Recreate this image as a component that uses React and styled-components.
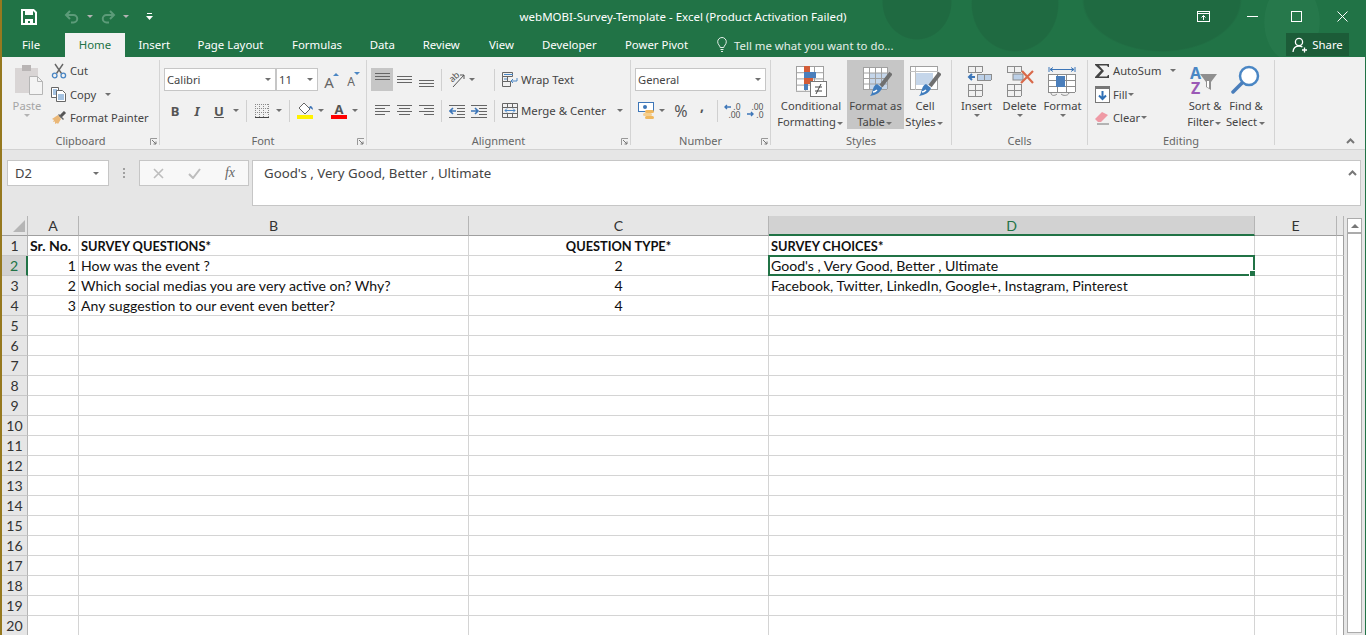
import React from 'react';
import styled, { createGlobalStyle } from 'styled-components';

const UI = '"Noto Sans", "Open Sans", sans-serif';
const CELL = 'Lato, "Open Sans", sans-serif';
const GREEN = '#217346';
const BLUE = '#4a86c4';

const GlobalStyle = createGlobalStyle`
  html, body { margin: 0; padding: 0; background: #e6e6e6; overflow: hidden; }
`;

const Window = styled.div`
  width: 1366px;
  height: 635px;
  box-sizing: border-box;
  overflow: hidden;
  display: flex;
  flex-direction: column;
  border-left: 2px solid #96791f;
  border-right: 1px solid ${GREEN};
  font-family: ${UI};
  font-size: 11.2px;
  color: #444;
`;

const Header = styled.header`
  flex: none;
  height: 57px;
  color: #fff;
  background:
    radial-gradient(ellipse 35px 38px at 915px 2px, #1f6a41 97%, transparent 100%),
    radial-gradient(ellipse 44px 48px at 1013px 4px, #1f6a41 97%, transparent 100%),
    radial-gradient(ellipse 80px 52px at 1160px 0px, #1f6a41 97%, transparent 100%),
    radial-gradient(ellipse 28px 40px at 1290px 22px, #26784b 97%, transparent 100%),
    ${GREEN};
`;

const TitleRow = styled.div`
  height: 33px;
  display: grid;
  grid-template-columns: 1fr auto 1fr;
  align-items: center;
`;

const Qat = styled.div`
  display: flex;
  align-items: center;
  padding-left: 19px;
`;

const QatSlot = styled.div`
  width: ${({ $w }) => $w}px;
  display: flex;
  justify-content: center;
  align-items: center;
`;

const Title = styled.div`
  font-size: 11.5px;
  white-space: nowrap;
  margin-right: 1px;
`;

const WindowControls = styled.div`
  display: flex;
  justify-content: flex-end;
  align-items: center;
`;

const WindowButton = styled.div`
  width: ${({ $w }) => $w}px;
  display: flex;
  justify-content: center;
`;

const TabRow = styled.nav`
  height: 24px;
  display: flex;
  align-items: stretch;
`;

const Tab = styled.div`
  width: ${({ $w }) => $w}px;
  margin-right: ${({ $mr }) => $mr || 0}px;
  padding-bottom: 1px;
  box-sizing: border-box;
  display: flex;
  align-items: center;
  justify-content: center;
  white-space: nowrap;
  font-size: 11.4px;
  background: ${({ $active }) => ($active ? '#f1f1f1' : 'transparent')};
  color: ${({ $active }) => ($active ? GREEN : '#fff')};
`;

const TellMe = styled.div`
  display: flex;
  align-items: center;
  gap: 7px;
  margin-left: 14px;
  font-size: 11.4px;
  color: #e4efe9;
`;

const ShareButton = styled.div`
  margin-left: auto;
  margin-right: 16px;
  width: 63px;
  height: 23px;
  display: flex;
  align-items: center;
  justify-content: center;
  gap: 4px;
  font-size: 11.4px;
  background: #1c5c38;
`;

const Ribbon = styled.section`
  flex: none;
  height: 93px;
  box-sizing: border-box;
  padding-top: 3px;
  display: flex;
  align-items: flex-start;
  position: relative;
  background: #f1f1f1;
  border-bottom: 1px solid #d2d2d2;
`;

const Group = styled.div`
  width: ${({ $w }) => $w}px;
  height: 85px;
  flex: none;
  box-sizing: border-box;
  position: relative;
  display: flex;
  flex-direction: column;
  border-right: 1px solid #d4d4d4;
`;

const GroupBody = styled.div`
  height: 72px;
  flex: none;
  display: flex;
  padding-left: ${({ $pl }) => $pl || 0}px;
`;

const GroupLabel = styled.div`
  height: 13px;
  line-height: 18px;
  text-align: center;
  color: #666;
  font-size: 11px;
  white-space: nowrap;
`;

const Launcher = styled.svg`
  position: absolute;
  right: 2px;
  bottom: 0;
`;

const Stack = styled.div`
  padding-top: 8px;
  display: flex;
  flex-direction: column;
  gap: 8px;
`;

const ToolRow = styled.div`
  display: flex;
  align-items: center;
  height: 23px;
`;

const Select = styled.div`
  width: ${({ $w }) => $w}px;
  height: 23px;
  box-sizing: border-box;
  margin-right: ${({ $mr }) => $mr || 0}px;
  padding: 0 2px 1px;
  display: flex;
  align-items: center;
  justify-content: space-between;
  background: #fff;
  border: 1px solid #c6c6c6;
  color: #444;
`;

const ToolButton = styled.div`
  width: ${({ $w }) => $w || 22}px;
  height: 23px;
  margin-left: ${({ $ml }) => $ml || 0}px;
  flex: none;
  display: flex;
  align-items: center;
  justify-content: center;
  background: ${({ $active }) => ($active ? '#c6c6c6' : 'transparent')};
  font-size: ${({ $fs }) => $fs || 12}px;
  font-weight: ${({ $bold }) => ($bold ? 700 : 400)};
  font-style: ${({ $italic }) => ($italic ? 'italic' : 'normal')};
  text-decoration: ${({ $under }) => ($under ? 'underline' : 'none')};
  color: #555;
`;

const CommaMark = styled.span`
  font-size: 14px;
  font-weight: 700;
  line-height: 14px;
  color: #555;
  transform: translateY(-5px);
`;

const FxMark = styled.span`
  font-family: "Liberation Serif", serif;
  font-style: italic;
  font-size: 14px;
  color: #666;
`;

const GrowMark = styled.span`
  position: relative;
  font-size: ${({ $shrink }) => ($shrink ? 12 : 15)}px;
  line-height: 14px;
  color: #666;
  margin-top: 5px;
  margin-right: 4px;
  &::after {
    content: '';
    position: absolute;
    top: ${({ $shrink }) => ($shrink ? -3 : -2)}px;
    left: 100%;
    border-style: solid;
    border-width: ${({ $shrink }) => ($shrink ? '3px 3px 0' : '0 3px 3px')};
    border-color: ${BLUE} transparent;
    margin-left: -1px;
  }
`;

const ColorMark = styled.span`
  width: 16px;
  height: 17px;
  box-sizing: border-box;
  display: flex;
  justify-content: center;
  font-size: 13px;
  font-weight: 700;
  line-height: 14px;
  color: #555;
  border-bottom: 4px solid ${({ $color }) => $color};
`;

const RotatedAb = styled.span`
  position: absolute;
  left: 0;
  top: 0;
  font-size: 9px;
  line-height: 10px;
  color: #555;
  transform: rotate(-42deg);
`;

const OrientationWrap = styled.span`
  position: relative;
  width: 17px;
  height: 16px;
  display: block;
`;

const DecimalWrap = styled.span`
  position: relative;
  width: 17px;
  height: 15px;
  display: flex;
  flex-direction: column;
  font-size: 8.5px;
  line-height: 7.5px;
  color: #555;
  text-align: right;
`;

const DecimalArrow = styled.svg`
  position: absolute;
  left: 0;
  top: ${({ $top }) => $top}px;
`;

const SortLetter = styled.span`
  position: absolute;
  left: ${({ $left }) => $left}px;
  top: ${({ $top }) => $top}px;
  font-size: 16px;
  font-weight: 700;
  line-height: 16px;
  color: ${({ $color }) => $color};
`;

const SortWrap = styled.span`
  position: relative;
  width: 32px;
  height: 32px;
  display: block;
`;

const FunnelSvg = styled.svg`
  position: absolute;
  left: 11px;
  top: 8px;
`;

const Caret = styled.span`
  width: ${({ $w }) => $w || 10}px;
  margin-left: ${({ $ml }) => $ml || 0}px;
  flex: none;
  display: inline-flex;
  justify-content: center;
  vertical-align: middle;
  &::after {
    content: '';
    border-style: solid;
    border-width: 3px 3px 0;
    border-color: ${({ $light }) => ($light ? '#b3b3b3' : '#707070')} transparent transparent;
  }
`;

const Divider = styled.div`
  width: 1px;
  height: 22px;
  flex: none;
  margin-left: ${({ $ml }) => $ml || 4}px;
  margin-right: ${({ $mr }) => $mr || 4}px;
  background: #d0d0d0;
`;

const WideButton = styled.div`
  display: flex;
  align-items: center;
  gap: ${({ $gap }) => $gap || 3}px;
  padding-left: 3px;
  height: 23px;
  font-size: 11.4px;
  white-space: nowrap;
`;

const SmallColumn = styled.div`
  width: ${({ $w }) => $w}px;
  margin-left: ${({ $ml }) => $ml || 0}px;
  margin-top: -1px;
  flex: none;
  display: flex;
  flex-direction: column;
`;

const SmallButton = styled.div`
  height: 23.5px;
  display: flex;
  align-items: center;
  white-space: nowrap;
`;

const SmallIcon = styled.span`
  width: 16px;
  margin-right: 3px;
  flex: none;
  display: flex;
  justify-content: center;
`;

const BigButton = styled.div`
  width: ${({ $w }) => $w}px;
  height: 69px;
  flex: none;
  box-sizing: border-box;
  padding-top: 5px;
  display: flex;
  flex-direction: column;
  align-items: center;
  background: ${({ $active }) => ($active ? '#c6c6c6' : 'transparent')};
  color: ${({ $disabled }) => ($disabled ? '#a5a5a5' : '#444')};
  line-height: 16px;
  text-align: center;
  white-space: nowrap;
`;

const BigIcon = styled.div`
  height: 33px;
  flex: none;
  display: flex;
  align-items: flex-start;
  justify-content: center;
`;

const CollapseChevron = styled.svg`
  position: absolute;
  right: ${({ $right }) => $right}px;
  bottom: ${({ $bottom }) => $bottom}px;
`;

const FormulaBar = styled.div`
  flex: none;
  height: 66px;
  box-sizing: border-box;
  padding: 10px 4px 0 5px;
  display: flex;
  align-items: flex-start;
  background: #e6e6e6;
`;

const NameBox = styled.div`
  width: 102px;
  height: 26px;
  box-sizing: border-box;
  padding: 0 7px;
  display: flex;
  align-items: center;
  justify-content: space-between;
  background: #fff;
  border: 1px solid #c6c6c6;
  font-size: 13px;
`;

const GripDots = styled.div`
  width: 30px;
  height: 26px;
  display: flex;
  flex-direction: column;
  align-items: center;
  justify-content: center;
  gap: 2px;
  & > i {
    width: 2px;
    height: 2px;
    background: #a0a0a0;
  }
`;

const FxBox = styled.div`
  width: 110px;
  height: 26px;
  box-sizing: border-box;
  margin-right: 3px;
  display: grid;
  grid-template-columns: 36px 36px 36px;
  align-items: center;
  justify-items: center;
  background: #f8f8f8;
  border: 1px solid #c6c6c6;
`;

const FormulaInput = styled.div`
  flex: 1;
  height: 46px;
  box-sizing: border-box;
  padding: 3px 11px;
  position: relative;
  background: #fff;
  border: 1px solid #c6c6c6;
  font-size: 13.25px;
  line-height: 18px;
`;

const SheetArea = styled.div`
  flex: none;
  display: flex;
  align-items: flex-start;
`;

const SheetGrid = styled.div`
  flex: none;
  display: grid;
  grid-template-columns: 26px 51px 390px 300px 486px 82px 7px;
  grid-auto-rows: 20px;
  font-family: ${CELL};
  font-size: 14.1px;
  color: #111;
`;

const Corner = styled.div`
  background: #e6e6e6;
  border-right: 1px solid #b5b5b5;
  border-bottom: 1px solid #9f9f9f;
  box-sizing: border-box;
  display: flex;
  align-items: flex-end;
  justify-content: flex-end;
  padding: 0 2px 3px 0;
  &::after {
    content: '';
    border-style: solid;
    border-width: 0 0 12px 12px;
    border-color: transparent transparent #b5b5b5;
  }
`;

const ColHead = styled.div`
  box-sizing: border-box;
  display: flex;
  align-items: center;
  justify-content: center;
  background: ${({ $selected }) => ($selected ? '#d2d2d2' : '#e6e6e6')};
  color: ${({ $selected }) => ($selected ? GREEN : '#333')};
  border-right: 1px solid #b5b5b5;
  border-bottom: ${({ $selected }) => ($selected ? `2px solid ${GREEN}` : '1px solid #9f9f9f')};
`;

const RowHead = styled.div`
  box-sizing: border-box;
  display: flex;
  align-items: center;
  justify-content: center;
  background: ${({ $selected }) => ($selected ? '#d2d2d2' : '#e6e6e6')};
  color: ${({ $selected }) => ($selected ? GREEN : '#333')};
  border-bottom: 1px solid #c8c8c8;
  border-right: ${({ $selected }) => ($selected ? `2px solid ${GREEN}` : '1px solid #b5b5b5')};
`;

const Cell = styled.div`
  box-sizing: border-box;
  position: relative;
  padding: 0 2px;
  display: flex;
  align-items: center;
  white-space: nowrap;
  justify-content: ${({ $align }) =>
    $align === 'right' ? 'flex-end' : $align === 'center' ? 'center' : 'flex-start'};
  font-weight: ${({ $bold }) => ($bold ? 700 : 400)};
  font-size: ${({ $caps }) => ($caps ? '12.8px' : 'inherit')};
  background: #fff;
  border-right: 1px solid ${({ $edge }) => ($edge ? '#9f9f9f' : '#d4d4d4')};
  border-bottom: 1px solid #d4d4d4;
`;

const Selection = styled.div`
  position: absolute;
  left: -1px;
  top: -1px;
  right: -1px;
  bottom: -1px;
  border: 2px solid ${GREEN};
  pointer-events: none;
  &::after {
    content: '';
    position: absolute;
    right: -3px;
    bottom: -3px;
    width: 5px;
    height: 5px;
    background: ${GREEN};
    border: 1px solid #fff;
  }
`;

const ScrollTrack = styled.div`
  width: 21px;
  box-sizing: border-box;
  padding: 2px 0 0 3px;
  flex: none;
  display: flex;
  flex-direction: column;
  background: #e6e6e6;
`;

const ScrollUp = styled.div`
  width: 15px;
  height: 15px;
  box-sizing: border-box;
  display: flex;
  align-items: center;
  justify-content: center;
  background: #fff;
  border: 1px solid #ababab;
  &::after {
    content: '';
    border-style: solid;
    border-width: 0 4px 4px;
    border-color: transparent transparent #777;
  }
`;

const ScrollThumb = styled.div`
  width: 15px;
  height: 400px;
  box-sizing: border-box;
  background: #fff;
  border: 1px solid #ababab;
`;

const Svg = ({ w, h, children }) => (
  <svg width={w} height={h} viewBox={`0 0 ${w} ${h}`} style={{ display: 'block', flex: 'none' }}>
    {children}
  </svg>
);

const SaveIcon = () => (
  <Svg w={16} h={16}>
    <path d="M1 1h11.5L15 3.5V15H1z" fill="none" stroke="#fff" strokeWidth="2" />
    <rect x="4" y="1" width="8" height="5" fill="#fff" />
    <path d="M4 15V10h8v5h-3v-3H7v3z" fill="#fff" />
  </Svg>
);

const UndoIcon = ({ flip }) => (
  <svg width="16" height="14" viewBox="0 0 16 14" style={{ display: 'block', transform: flip ? 'scaleX(-1)' : 'none' }}>
    <path d="M6 1L2 5l4 4M2 5h7.5a3.6 3.6 0 0 1 0 7.5H7" fill="none" stroke="#5c9b79" strokeWidth="2" />
  </svg>
);

const QatMore = () => (
  <Svg w={7} h={8}>
    <rect x="1" y="0" width="5" height="1" fill="#fff" />
    <path d="M0 3h7L3.500 7z" fill="#fff" />
  </Svg>
);

const RibbonDisplayIcon = () => (
  <Svg w={13} h={11}>
    <rect x="0.500" y="0.500" width="12" height="10" fill="none" stroke="#fff" />
    <path d="M0 2.500h13M6.500 9V4.500M4.500 6.500l2-2 2 2" fill="none" stroke="#fff" />
  </Svg>
);

const MinIcon = () => (
  <Svg w={11} h={11}>
    <rect y="5" width="11" height="1" fill="#fff" />
  </Svg>
);

const MaxIcon = () => (
  <Svg w={11} h={11}>
    <rect x="0.500" y="0.500" width="10" height="10" fill="none" stroke="#fff" />
  </Svg>
);

const CloseIcon = () => (
  <Svg w={11} h={11}>
    <path d="M0.500 0.500l10 10M10.500 0.500l-10 10" stroke="#fff" />
  </Svg>
);

const BulbIcon = () => (
  <Svg w={10} h={16}>
    <path d="M3.200 10.500C3 8.500 .7 7.600 .7 4.800a4.300 4.300 0 0 1 8.600 0c0 2.800-2.300 3.700-2.500 5.700z" fill="none" stroke="#e4efe9" />
    <path d="M3.500 12.500h3M4 14.500h2" stroke="#e4efe9" />
  </Svg>
);

const PersonIcon = () => (
  <Svg w={16} h={16}>
    <circle cx="7" cy="5" r="3.600" fill="none" stroke="#fff" strokeWidth="1.300" />
    <path d="M1 15c.3-3.500 2.600-6 6-6 1.400 0 2.500.4 3.400 1M12.500 10.500v5M10 13h5" fill="none" stroke="#fff" strokeWidth="1.300" />
  </Svg>
);

const PasteIcon = () => (
  <Svg w={32} h={30}>
    <rect x="4" y="3" width="23" height="25" fill="#d9d5d5" />
    <rect x="11" y="0" width="9" height="6" fill="#b9b5b5" />
    <path d="M18.500 11.500h8l5 5v13h-13z" fill="#f4f4f4" stroke="#b5b5b5" />
    <path d="M26.500 11.500v5h5" fill="none" stroke="#b5b5b5" />
  </Svg>
);

const ScissorsIcon = () => (
  <Svg w={16} h={16}>
    <path d="M4 1l6.500 9.500M12 1L5.500 10.500" fill="none" stroke="#666" strokeWidth="1.400" />
    <circle cx="3.700" cy="12.500" r="2.300" fill="none" stroke={BLUE} strokeWidth="1.300" />
    <circle cx="12.300" cy="12.500" r="2.300" fill="none" stroke={BLUE} strokeWidth="1.300" />
  </Svg>
);

const CopyIcon = () => (
  <Svg w={16} h={16}>
    <path d="M.5 1.500h7v10h-7z" fill="#fff" stroke="#666" />
    <path d="M5.500 4.500h6l3 3v8h-9z" fill="#fff" stroke="#666" />
    <path d="M2 4h4M2 6h3M2 8h3M7 9h6M7 11h6M7 13h6" stroke={BLUE} />
  </Svg>
);

const BrushIcon = () => (
  <Svg w={16} h={14}>
    <path d="M9 6l5-5" stroke="#555" strokeWidth="3" />
    <path d="M8 3l5 5-1 1-5-5z" fill="#666" />
    <path d="M7 4L1 8l2 1-1 2 2-.5V13l2-1 1 1 3-5z" fill="#eab777" />
  </Svg>
);

const BordersIcon = () => (
  <Svg w={14} h={15}>
    <path d="M.5 1v13M4.500 1v13M8.500 1v13M13.500 1v13M0 1.500h14M0 5.500h14M0 9.500h14" stroke="#8a8a8a" strokeDasharray="1 1" fill="none" />
    <path d="M0 14.500h14" stroke="#444" />
  </Svg>
);

const FillColorIcon = () => (
  <Svg w={17} h={17}>
    <path d="M7 1l6 6-5 5-6-6z" fill="#fff" stroke="#666" />
    <path d="M13 4c2 0 3 2 3 4-1-1-2-2-4-2z" fill="#3f74b5" />
    <rect x="0" y="13" width="16" height="4" fill="#fff200" />
  </Svg>
);

// text-alignment glyphs: rows of [x, width]
const AlignIcon = ({ top, rows }) => (
  <Svg w={15} h={17}>
    {rows.map(([x, w], i) => (
      <rect key={i} x={x} y={top + i * 3} width={w} height="1" fill="#666" />
    ))}
  </Svg>
);

const OrientationIcon = () => (
  <OrientationWrap>
    <RotatedAb>ab</RotatedAb>
    <svg width="17" height="16" viewBox="0 0 17 16" style={{ display: 'block' }}>
      <path d="M4 15L15 3M11 3h4v4" fill="none" stroke="#555" />
    </svg>
  </OrientationWrap>
);

const IndentIcon = ({ flip }) => (
  <Svg w={16} h={14}>
    {[1, 4, 7, 10, 13].map((y) => (
      <rect key={y} x={y === 1 || y === 13 ? 0 : 8} y={y} width={y === 1 || y === 13 ? 16 : 8} height="1" fill="#666" />
    ))}
    <path d={flip ? 'M0 7h6M4 4l3 3-3 3' : 'M1 7h6M4 4L1 7l3 3'} fill="none" stroke="#3d76b8" strokeWidth="1.600" />
  </Svg>
);

const WrapIcon = () => (
  <Svg w={16} h={16}>
    <path d="M.5 .5h10v4H.5zM.5 4.500h5v5h-5zM.5 9.500h8v5h-8z" fill="none" stroke="#666" />
    <path d="M2 2.500h9M2 7h3M15 6v3h-6M11 7l-2 2 2 2" fill="none" stroke={BLUE} />
  </Svg>
);

const MergeIcon = () => (
  <Svg w={16} h={15}>
    <path d="M.5 .5h15v14H.5zM.5 4.500h15M.5 10.500h15M5.500 .5v4M10.500 .5v4M5.500 10.500v4M10.500 10.500v4" fill="none" stroke="#666" />
    <path d="M3 7.500h10M5 5.500l-2 2 2 2M11 5.500l2 2-2 2" fill="none" stroke={BLUE} />
  </Svg>
);

const AccountingIcon = () => (
  <Svg w={17} h={17}>
    <rect x="0.500" y="0.500" width="15" height="9" fill="#fff" stroke="#3d76b8" />
    <circle cx="7" cy="5" r="2" fill="#3d76b8" />
    <rect x="7" y="8" width="9" height="3" rx="1.500" fill="#f0b85e" />
    <rect x="5" y="11" width="9" height="3" rx="1.500" fill="#f5cf8f" />
    <rect x="7" y="14" width="9" height="3" rx="1.500" fill="#f0b85e" />
  </Svg>
);

const DecimalIcon = ({ more }) => (
  <DecimalWrap>
    <span>{more ? '.00' : '.0'}</span>
    <span>{more ? '.0' : '.00'}</span>
    <DecimalArrow $top={more ? 8 : 1} width="8" height="6" viewBox="0 0 8 6">
      <path d={more ? 'M0 3h6M4 1l2 2-2 2' : 'M1 3h6M3 1L1 3l2 2'} fill="none" stroke="#3d76b8" strokeWidth="1.400" />
    </DecimalArrow>
  </DecimalWrap>
);

const TableGrid = ({ x, y, cols, rows, size, h, stroke = '#8c8c8c' }) => (
  <g stroke={stroke} fill="none">
    {Array.from({ length: rows + 1 }, (_, i) => (
      <path key={`r${i}`} d={`M${x} ${y + i * h + 0.5}h${cols * size}`} />
    ))}
    {Array.from({ length: cols + 1 }, (_, i) => (
      <path key={`c${i}`} d={`M${x + i * size + 0.5} ${y}v${rows * h}`} />
    ))}
  </g>
);

const ConditionalIcon = () => (
  <Svg w={32} h={32}>
    <rect x="1" y="1" width="27" height="25" fill="#fff" />
    <TableGrid x={1} y={1} cols={3} rows={4} size={9} h={6.200} stroke="#a0a0a0" />
    <rect x="9" y="1" width="6" height="6" fill="#d35d38" />
    <rect x="9" y="7" width="12" height="6" fill="#4a7ebb" />
    <rect x="9" y="13" width="9" height="6" fill="#d35d38" />
    <rect x="9" y="19" width="4" height="6" fill="#4a7ebb" />
    <rect x="15.500" y="16.500" width="16" height="15" fill="#fff" stroke="#777" />
    <path d="M20 22h7M20 26h7M26 19l-5 10" stroke="#444" fill="none" />
  </Svg>
);

const Brush = () => (
  <g>
    <path d="M21 21L31 8" stroke="#6f6f6f" strokeWidth="4" />
    <path d="M17 19l5 4c-2 5-6 7-12 8 2-2 2-4 3-7 1-3 2-4 4-5z" fill="#3f7cbd" />
    <path d="M13 27c2 0 3-1 4-2" stroke="#fff" strokeWidth="1.500" fill="none" />
  </g>
);

const TableStyleIcon = () => (
  <Svg w={32} h={32}>
    <rect x="3" y="2" width="25" height="22" fill="#fff" />
    <rect x="9" y="8" width="19" height="16" fill="#c5d6ea" />
    <TableGrid x={3} y={2} cols={4} rows={4} size={6} h={5.500} stroke="#a0a0a0" />
    <Brush />
  </Svg>
);

const CellStyleIcon = () => (
  <Svg w={32} h={32}>
    <rect x="1.500" y="1.500" width="27" height="23" fill="#fff" stroke="#a0a0a0" />
    <path d="M1 6.500h28M6.500 2v23" stroke="#c0c0c0" />
    <rect x="7" y="8" width="17" height="12" fill="#c5d6ea" />
    <Brush />
  </Svg>
);

const InsertIcon = () => (
  <Svg w={32} h={32}>
    <TableGrid x={7} y={1} cols={2} rows={1} size={7} h={6} />
    <TableGrid x={7} y={19} cols={2} rows={2} size={7} h={6} />
    <rect x="16" y="9" width="14" height="6" fill="#bcd0e8" />
    <TableGrid x={16} y={9} cols={2} rows={1} size={7} h={6} />
    <path d="M14 12H8M11 9l-3 3 3 3" fill="none" stroke="#3d76b8" strokeWidth="2" />
  </Svg>
);

const DeleteIcon = () => (
  <Svg w={32} h={32}>
    <TableGrid x={3} y={1} cols={2} rows={1} size={7} h={6} />
    <TableGrid x={3} y={19} cols={2} rows={2} size={7} h={6} />
    <rect x="9" y="9" width="10" height="6" fill="#bcd0e8" stroke="#8c8c8c" />
    <path d="M18 6l11 12M29 6L17 18" stroke="#d9694a" strokeWidth="2.200" fill="none" />
  </Svg>
);

const FormatIcon = () => (
  <Svg w={32} h={32}>
    <path d="M2 2v5M28 2v5M3 4.500h24M6 2.500l-3 2 3 2M24 2.500l3 2-3 2" fill="none" stroke="#3d76b8" />
    <rect x="1" y="9" width="27" height="19" fill="#fff" />
    <TableGrid x={1} y={9} cols={3} rows={3} size={9} h={6} />
    <rect x="9" y="11" width="9" height="11" fill="#4a7ebb" />
    <path d="M4 28c0 3 4 3 6 1M14 29c2 2 7 2 8-1" fill="none" stroke="#8c8c8c" />
  </Svg>
);

const SigmaIcon = () => (
  <Svg w={16} h={16}>
    <path d="M1 1h14v3h-1l-1-1.500H5l5 5.500-5 5.500h8l1-1.500h1v3H1v-1l6-6.500L1 2z" fill="#444" />
  </Svg>
);

const FillIcon = () => (
  <Svg w={15} h={17}>
    <rect x="0.500" y="0.500" width="14" height="16" fill="#fff" stroke="#777" />
    <rect x="0" y="0" width="15" height="3" fill="#777" />
    <path d="M7.500 5v8M4 9.500l3.500 3.500 3.500-3.500" fill="none" stroke="#2f6fb5" strokeWidth="2" />
  </Svg>
);

const EraserIcon = () => (
  <Svg w={16} h={14}>
    <path d="M1 8l7-7 6 3-7 7H4z" fill="#ef9aa5" />
    <path d="M3 13h12" stroke="#777" />
  </Svg>
);

const SortFilterIcon = () => (
  <SortWrap>
    <SortLetter $left={1} $top={0} $color={BLUE}>A</SortLetter>
    <SortLetter $left={2} $top={15} $color="#9b59b6">Z</SortLetter>
    <FunnelSvg width="18" height="18" viewBox="0 0 18 18">
      <path d="M0 1h17l-6 8v8l-5-3V9z" fill="#8f8f8f" />
      <path d="M7 8v6l2 1V8z" fill="#fff" />
    </FunnelSvg>
  </SortWrap>
);

const FindIcon = () => (
  <Svg w={30} h={32}>
    <circle cx="18" cy="11" r="9" fill="#fff" stroke={BLUE} strokeWidth="2.500" />
    <path d="M11 18L2 27" stroke="#4a7ebb" strokeWidth="3.500" strokeLinecap="round" />
  </Svg>
);

const LauncherIcon = () => (
  <Launcher width="7" height="7" viewBox="0 0 7 7">
    <path d="M.5 7V.5H7" fill="none" stroke="#999" />
    <path d="M2 2l4 4M6 3.500V6H3.500" fill="none" stroke="#777" />
  </Launcher>
);

const Chevron = ({ right, bottom }) => (
  <CollapseChevron $right={right} $bottom={bottom} width="9" height="6" viewBox="0 0 9 6">
    <path d="M1 5l3.500-3.500L8 5" fill="none" stroke="#777" strokeWidth="2" />
  </CollapseChevron>
);

const columns = ['A', 'B', 'C', 'D', 'E', ''];

const sheetData = {
  1: [['Sr. No.', { bold: true }], ['SURVEY QUESTIONS*', { bold: true, caps: true }], ['QUESTION TYPE*', { bold: true, caps: true, align: 'center' }], ['SURVEY CHOICES*', { bold: true, caps: true }]],
  2: [['1', { align: 'right' }], ['How was the event ?'], ['2', { align: 'center' }], ["Good's , Very Good, Better , Ultimate", { selected: true }]],
  3: [['2', { align: 'right' }], ['Which social medias you are very active on? Why?'], ['4', { align: 'center' }], ['Facebook, Twitter, LinkedIn, Google+, Instagram, Pinterest']],
  4: [['3', { align: 'right' }], ['Any suggestion to our event even better?'], ['4', { align: 'center' }], ['']],
};

const rowNumbers = Array.from({ length: 20 }, (_, i) => i + 1);

function Sheet() {
  return (
    <SheetGrid>
      <Corner />
      {columns.map((c, i) => (
        <ColHead key={i} $selected={c === 'D'}>{c}</ColHead>
      ))}
      {rowNumbers.map((n) => (
        <React.Fragment key={n}>
          <RowHead $selected={n === 2}>{n}</RowHead>
          {columns.map((c, i) => {
            const [text, opts = {}] = (sheetData[n] && sheetData[n][i]) || [''];
            return (
              <Cell key={c || 'edge'} $bold={opts.bold} $caps={opts.caps} $align={opts.align} $edge={c === ''}>
                {text}
                {opts.selected && <Selection />}
              </Cell>
            );
          })}
        </React.Fragment>
      ))}
    </SheetGrid>
  );
}

export default function App() {
  return (
    <>
      <GlobalStyle />
      <Window>
        <Header>
          <TitleRow>
            <Qat>
              <QatSlot $w={16}><SaveIcon /></QatSlot>
              <QatSlot $w={27} />
              <QatSlot $w={16}><UndoIcon /></QatSlot>
              <Caret $w={20} $light />
              <QatSlot $w={16}><UndoIcon flip /></QatSlot>
              <Caret $w={20} $light />
              <QatSlot $w={26}><QatMore /></QatSlot>
            </Qat>
            <Title>webMOBI-Survey-Template - Excel (Product Activation Failed)</Title>
            <WindowControls>
              <WindowButton $w={56}><RibbonDisplayIcon /></WindowButton>
              <WindowButton $w={42}><MinIcon /></WindowButton>
              <WindowButton $w={46}><MaxIcon /></WindowButton>
              <WindowButton $w={46}><CloseIcon /></WindowButton>
            </WindowControls>
          </TitleRow>
          <TabRow>
            <Tab $w={58} $mr={5}>File</Tab>
            <Tab $w={60} $active>Home</Tab>
            <Tab $w={58.500}>Insert</Tab>
            <Tab $w={94}>Page Layout</Tab>
            <Tab $w={79}>Formulas</Tab>
            <Tab $w={51.500}>Data</Tab>
            <Tab $w={66.500}>Review</Tab>
            <Tab $w={54}>View</Tab>
            <Tab $w={81.500}>Developer</Tab>
            <Tab $w={93}>Power Pivot</Tab>
            <TellMe><BulbIcon />Tell me what you want to do...</TellMe>
            <ShareButton><PersonIcon />Share</ShareButton>
          </TabRow>
        </Header>

        <Ribbon>
          <Group $w={158}>
            <GroupBody $pl={7}>
              <BigButton $w={36} $disabled>
                <BigIcon><PasteIcon /></BigIcon>
                <div>Paste</div>
                <Caret $light />
              </BigButton>
              <SmallColumn $ml={6} $w={100}>
                <SmallButton><SmallIcon><ScissorsIcon /></SmallIcon>Cut</SmallButton>
                <SmallButton><SmallIcon><CopyIcon /></SmallIcon>Copy<Caret $ml={7} /></SmallButton>
                <SmallButton><SmallIcon><BrushIcon /></SmallIcon>Format Painter</SmallButton>
              </SmallColumn>
            </GroupBody>
            <GroupLabel>Clipboard</GroupLabel>
            <LauncherIcon />
          </Group>

          <Group $w={207}>
            <GroupBody $pl={4}>
              <Stack>
                <ToolRow>
                  <Select $w={112}>Calibri<Caret /></Select>
                  <Select $w={42}>11<Caret /></Select>
                  <ToolButton $ml={2}><GrowMark>A</GrowMark></ToolButton>
                  <ToolButton><GrowMark $shrink>A</GrowMark></ToolButton>
                </ToolRow>
                <ToolRow>
                  <ToolButton $bold $fs={13}>B</ToolButton>
                  <ToolButton $italic $bold $fs={13}>I</ToolButton>
                  <ToolButton $bold $under $fs={13}>U</ToolButton>
                  <Caret $w={12} />
                  <Divider $ml={4} $mr={4} />
                  <ToolButton><BordersIcon /></ToolButton>
                  <Caret $w={12} />
                  <Divider $ml={4} $mr={4} />
                  <ToolButton><FillColorIcon /></ToolButton>
                  <Caret />
                  <ToolButton $ml={2}><ColorMark $color="#f00">A</ColorMark></ToolButton>
                  <Caret />
                </ToolRow>
              </Stack>
            </GroupBody>
            <GroupLabel>Font</GroupLabel>
            <LauncherIcon />
          </Group>

          <Group $w={264}>
            <GroupBody $pl={4}>
              <Stack>
                <ToolRow>
                  <ToolButton $active><AlignIcon top={2} rows={[[0, 15], [0, 15], [0, 15]]} /></ToolButton>
                  <ToolButton><AlignIcon top={5} rows={[[0, 15], [0, 15], [0, 15]]} /></ToolButton>
                  <ToolButton><AlignIcon top={9} rows={[[0, 15], [0, 15], [0, 15]]} /></ToolButton>
                  <Divider />
                  <ToolButton><OrientationIcon /></ToolButton>
                  <Caret $w={8} />
                  <Divider $ml={18} />
                  <WideButton><WrapIcon />Wrap Text</WideButton>
                </ToolRow>
                <ToolRow>
                  <ToolButton><AlignIcon top={3} rows={[[0, 15], [0, 10], [0, 15], [0, 10]]} /></ToolButton>
                  <ToolButton><AlignIcon top={3} rows={[[0, 15], [2, 11], [0, 15], [2, 11]]} /></ToolButton>
                  <ToolButton><AlignIcon top={3} rows={[[0, 15], [5, 10], [0, 15], [5, 10]]} /></ToolButton>
                  <Divider />
                  <ToolButton><IndentIcon /></ToolButton>
                  <ToolButton><IndentIcon flip /></ToolButton>
                  <Divider />
                  <WideButton>
                    <MergeIcon />Merge &amp; Center
                    <Caret $ml={6} />
                  </WideButton>
                </ToolRow>
              </Stack>
            </GroupBody>
            <GroupLabel>Alignment</GroupLabel>
            <LauncherIcon />
          </Group>

          <Group $w={140}>
            <GroupBody $pl={4}>
              <Stack>
                <ToolRow>
                  <Select $w={131}>General<Caret /></Select>
                </ToolRow>
                <ToolRow>
                  <ToolButton><AccountingIcon /></ToolButton>
                  <Caret />
                  <ToolButton $ml={3} $fs={16}>%</ToolButton>
                  <ToolButton $w={20}><CommaMark>,</CommaMark></ToolButton>
                  <Divider $ml={5} $mr={3} />
                  <ToolButton><DecimalIcon /></ToolButton>
                  <ToolButton $ml={1}><DecimalIcon more /></ToolButton>
                </ToolRow>
              </Stack>
            </GroupBody>
            <GroupLabel>Number</GroupLabel>
            <LauncherIcon />
          </Group>

          <Group $w={181}>
            <GroupBody $pl={4}>
              <BigButton $w={72}>
                <BigIcon><ConditionalIcon /></BigIcon>
                <div>Conditional</div>
                <div>Formatting<Caret $w={9} /></div>
              </BigButton>
              <BigButton $w={57} $active>
                <BigIcon><TableStyleIcon /></BigIcon>
                <div>Format as</div>
                <div>Table<Caret $w={9} /></div>
              </BigButton>
              <BigButton $w={42}>
                <BigIcon><CellStyleIcon /></BigIcon>
                <div>Cell</div>
                <div>Styles<Caret $w={9} /></div>
              </BigButton>
            </GroupBody>
            <GroupLabel>Styles</GroupLabel>
          </Group>

          <Group $w={136}>
            <GroupBody $pl={3}>
              <BigButton $w={43}>
                <BigIcon><InsertIcon /></BigIcon>
                <div>Insert</div>
                <Caret />
              </BigButton>
              <BigButton $w={43}>
                <BigIcon><DeleteIcon /></BigIcon>
                <div>Delete</div>
                <Caret />
              </BigButton>
              <BigButton $w={43}>
                <BigIcon><FormatIcon /></BigIcon>
                <div>Format</div>
                <Caret />
              </BigButton>
            </GroupBody>
            <GroupLabel>Cells</GroupLabel>
          </Group>

          <Group $w={187}>
            <GroupBody $pl={6}>
              <SmallColumn $w={90}>
                <SmallButton><SmallIcon><SigmaIcon /></SmallIcon>AutoSum<Caret $ml={7} /></SmallButton>
                <SmallButton><SmallIcon><FillIcon /></SmallIcon>Fill<Caret $w={8} /></SmallButton>
                <SmallButton><SmallIcon><EraserIcon /></SmallIcon>Clear<Caret $w={8} /></SmallButton>
              </SmallColumn>
              <BigButton $w={42}>
                <BigIcon><SortFilterIcon /></BigIcon>
                <div>Sort &amp;</div>
                <div>Filter<Caret $w={9} /></div>
              </BigButton>
              <BigButton $w={40}>
                <BigIcon><FindIcon /></BigIcon>
                <div>Find &amp;</div>
                <div>Select<Caret $w={9} /></div>
              </BigButton>
            </GroupBody>
            <GroupLabel>Editing</GroupLabel>
          </Group>

          <Chevron right={10} bottom={5} />
        </Ribbon>

        <FormulaBar>
          <NameBox>D2<Caret /></NameBox>
          <GripDots><i /><i /><i /></GripDots>
          <FxBox>
            <Svg w={11} h={11}><path d="M1 1l9 9M10 1l-9 9" stroke="#bdbdbd" strokeWidth="1.600" /></Svg>
            <Svg w={13} h={11}><path d="M1 6l4 4 7-9" fill="none" stroke="#bdbdbd" strokeWidth="2" /></Svg>
            <FxMark>fx</FxMark>
          </FxBox>
          <FormulaInput>
            Good's , Very Good, Better , Ultimate
            <Chevron right={3} bottom={29} />
          </FormulaInput>
        </FormulaBar>

        <SheetArea>
          <Sheet />
          <ScrollTrack>
            <ScrollUp />
            <ScrollThumb />
          </ScrollTrack>
        </SheetArea>
      </Window>
    </>
  );
}
